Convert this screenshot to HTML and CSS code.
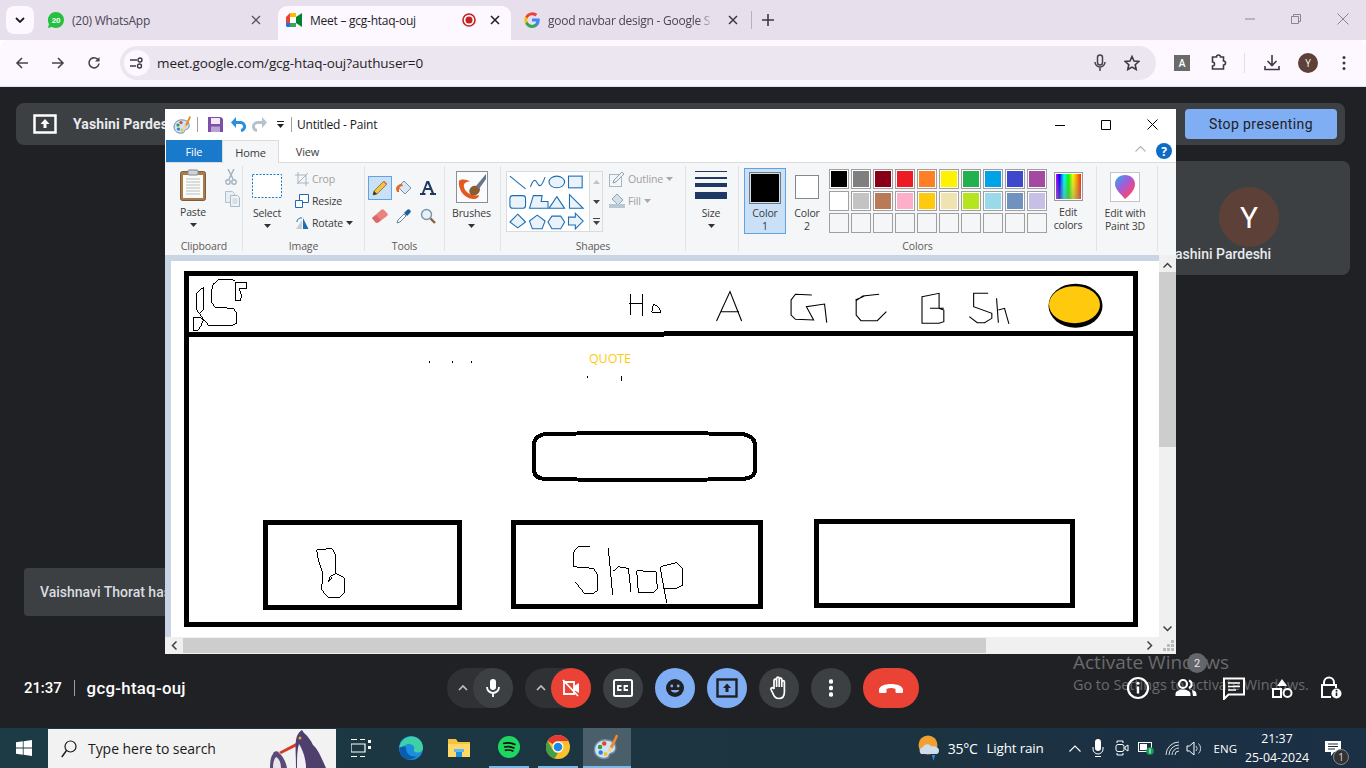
FILE: index.html
```html
<!DOCTYPE html>
<html lang="en">
<head>
<meta charset="utf-8">
<title>Meet</title>
<link rel="stylesheet" href="styles.css">
</head>
<body>
<svg class="defs" width="0" height="0">
  <symbol id="palette" viewBox="0 0 20 20">
    <path d="M1 12c0-5 5-8 9-7 4 0 7 3 6 7-1 3-3 2-4 3s0 3-3 3c-4 1-8-2-8-6z" fill="#cfe3f2" stroke="#6c8ba6"/>
    <circle cx="5" cy="10" r="1.6" fill="#2f9e44"/><circle cx="8" cy="7.5" r="1.6" fill="#e8412c"/><circle cx="5.5" cy="14" r="1.6" fill="#2f7fd6"/><circle cx="9" cy="15" r="1.4" fill="#f2c521"/>
    <path d="M16.500 1l1.500 1-4 9-2-1z" fill="#e98a2b"/><path d="M11.500 10l2 1-1 3-2-1z" fill="#f3d08a"/>
  </symbol>
  <symbol id="caret" viewBox="0 0 7 4"><path d="M0 0h7L3.500 4z" fill="#333"/></symbol>
</svg>

<div class="screen">
  <header class="tabstrip">
    <div class="tabmenu"><svg width="10" height="6" viewBox="0 0 10 6"><path d="M1 1l4 4 4-4" fill="none" stroke="#1f1f1f" stroke-width="1.800"/></svg></div>
    <div class="tab tab-wa">
      <svg class="favicon" width="16" height="16" viewBox="0 0 16 16"><path d="M8 0a8 8 0 0 1 0 16c-1.500 0-2.800-.4-4-1l-4 1 1-4A8 8 0 0 1 8 0z" fill="#25c03f"/><text x="8" y="11" class="wa-num">20</text></svg>
      <span class="tab-title">(20) WhatsApp</span>
      <svg class="x" width="10" height="10" viewBox="0 0 10 10"><path d="M1 1l8 8M9 1L1 9" stroke="#5c5866" stroke-width="1.400"/></svg>
    </div>
    <div class="tab tab-active">
      <svg class="favicon" width="16" height="14" viewBox="0 0 16 14"><path d="M0 4l4-4h6v4H4v6H0z" fill="#ea4335"/><path d="M0 10h4v4H1.500C.6 14 0 13.400 0 12.500z" fill="#1a73e8"/><path d="M4 10h6v4H4z" fill="#34a853"/><path d="M4 0h6v4H4z" fill="#fbbc04"/><path d="M10 4v6l6 4V0z" fill="#00832d"/><path d="M4 4h6v6H4z" fill="#fff"/></svg>
      <span class="tab-title tab-title-dark">Meet – gcg-htaq-ouj</span>
      <svg class="rec" width="14" height="14" viewBox="0 0 14 14"><circle cx="7" cy="7" r="6" fill="none" stroke="#c5221f" stroke-width="1.600"/><circle cx="7" cy="7" r="3.500" fill="#c5221f"/></svg>
      <svg class="x x-near" width="10" height="10" viewBox="0 0 10 10"><path d="M1 1l8 8M9 1L1 9" stroke="#1f1f1f" stroke-width="1.500"/></svg>
    </div>
    <div class="tab tab-g">
      <svg class="favicon" width="16" height="16" viewBox="0 0 16 16"><path d="M15.700 8.200c0-.6 0-1.100-.2-1.600H8v3h4.300c-.2 1-.8 1.900-1.600 2.400v2h2.600c1.500-1.400 2.400-3.400 2.400-5.800z" fill="#4285f4"/><path d="M8 16c2.200 0 4-.7 5.300-1.900l-2.600-2c-.7.500-1.600.8-2.700.8-2.100 0-3.900-1.400-4.500-3.300H1.300v2.100A8 8 0 0 0 8 16z" fill="#34a853"/><path d="M3.500 9.600a4.800 4.800 0 0 1 0-3.100V4.400H1.300a8 8 0 0 0 0 7.300z" fill="#fbbc05"/><path d="M8 3.200c1.200 0 2.300.4 3.100 1.200l2.300-2.300A8 8 0 0 0 1.300 4.400l2.200 2.100C4.100 4.600 5.900 3.200 8 3.200z" fill="#ea4335"/></svg>
      <span class="tab-title tab-fade">good navbar design - Google S</span>
      <svg class="x" width="10" height="10" viewBox="0 0 10 10"><path d="M1 1l8 8M9 1L1 9" stroke="#3c3846" stroke-width="1.500"/></svg>
    </div>
    <span class="tab-sep"></span>
    <svg class="newtab" width="12" height="12" viewBox="0 0 12 12"><path d="M6 0v12M0 6h12" stroke="#3c3846" stroke-width="1.600"/></svg>
    <div class="winctl">
      <svg width="10" height="10" viewBox="0 0 10 10"><path d="M0 5h10" stroke="#8a8594"/></svg>
      <svg width="10" height="10" viewBox="0 0 10 10"><path d="M.5 2.500h7v7h-7zM2.500 2.500v-2h7v7h-2" fill="none" stroke="#8a8594"/></svg>
      <svg width="12" height="12" viewBox="0 0 12 12"><path d="M.5.500l11 11M11.500.500l-11 11" stroke="#8a8594"/></svg>
    </div>
  </header>

  <nav class="toolbar">
    <svg class="nav-ico" width="14" height="14" viewBox="0 0 14 14"><path d="M13 7H2M7 2L2 7l5 5" fill="none" stroke="#47434f" stroke-width="1.600"/></svg>
    <svg class="nav-ico" width="14" height="14" viewBox="0 0 14 14"><path d="M1 7h11M7 2l5 5-5 5" fill="none" stroke="#47434f" stroke-width="1.600"/></svg>
    <svg class="nav-ico" width="14" height="14" viewBox="0 0 14 14"><path d="M12 7.500A5 5 0 1 1 10.500 3.200L12 4.500" fill="none" stroke="#47434f" stroke-width="1.600"/><path d="M12.500 1v4.500H8z" fill="#47434f"/></svg>
    <div class="omnibox">
      <span class="siteinfo"><svg width="14" height="12" viewBox="0 0 14 12"><path d="M0 3h7M0 9h6" stroke="#3c3846" stroke-width="1.400"/><circle cx="10" cy="3" r="2" fill="none" stroke="#3c3846" stroke-width="1.400"/><circle cx="9.500" cy="9" r="2" fill="none" stroke="#3c3846" stroke-width="1.400"/></svg></span>
      <span class="url">meet.google.com/gcg-htaq-ouj?authuser=0</span>
      <svg class="omni-mic" width="12" height="18" viewBox="0 0 12 18"><rect x="3.500" y="1" width="5" height="10" rx="2.500" fill="none" stroke="#47434f" stroke-width="1.500"/><path d="M1 8a5 5 0 0 0 10 0M6 13v4" fill="none" stroke="#47434f" stroke-width="1.500"/></svg>
      <svg class="omni-star" width="16" height="16" viewBox="0 0 16 16"><path d="M8 1.500l2 4.500 4.800.5-3.600 3.200 1 4.800L8 12.100l-4.200 2.400 1-4.800L1.200 6.500 6 6z" fill="none" stroke="#3c3846" stroke-width="1.600"/></svg>
    </div>
    <span class="ext-a">A</span>
    <svg class="ext-puzzle" width="18" height="18" viewBox="0 0 18 18"><path d="M3 4h4a2 2 0 0 1 4 0h3v4a2 2 0 0 1 0 4v4H3v-3a2 2 0 0 0 0-4z" fill="none" stroke="#3c3846" stroke-width="1.600" transform="translate(.5 -1)"/></svg>
    <span class="tool-sep"></span>
    <svg class="dl" width="16" height="16" viewBox="0 0 16 16"><path d="M8 0v10M3.500 6L8 10.500 12.500 6M1 11v3.500h14V11" fill="none" stroke="#3c3846" stroke-width="1.600"/></svg>
    <span class="avatar">Y</span>
    <svg class="dots" width="4" height="16" viewBox="0 0 4 16"><circle cx="2" cy="2.500" r="1.500" fill="#3c3846"/><circle cx="2" cy="8" r="1.500" fill="#3c3846"/><circle cx="2" cy="13.500" r="1.500" fill="#3c3846"/></svg>
  </nav>

  <main class="meet">
    <section class="present-bar">
      <svg class="present-ico" width="24" height="20" viewBox="0 0 24 20"><rect x="1.500" y="1.500" width="21" height="17" fill="none" stroke="#fff" stroke-width="2.500"/><path d="M12 5l-4.500 5H10.500v4h3v-4h3z" fill="#fff"/></svg>
      <span class="present-name">Yashini Pardeshi (Presentation)</span>
      <span class="stop-btn">Stop presenting</span>
    </section>
    <section class="tile-row">
      <div class="tile">
        <span class="tile-avatar">Y</span>
        <span class="tile-name">Yashini Pardeshi</span>
      </div>
    </section>
    <footer class="callbar">
      <div class="call-info"><span class="call-time">21:37</span><span class="call-sep"></span><span class="call-code">gcg-htaq-ouj</span></div>
      <div class="call-btns">
        <div class="pill">
          <svg class="pill-chev" width="10" height="6" viewBox="0 0 10 6"><path d="M1 5l4-4 4 4" fill="none" stroke="#bdc1c6" stroke-width="1.700"/></svg>
          <span class="cbtn"><svg width="14" height="20" viewBox="0 0 14 20"><rect x="4" y="1" width="6" height="11" rx="3" fill="#fff"/><path d="M1 9a6 6 0 0 0 12 0M7 15v4" fill="none" stroke="#fff" stroke-width="1.800"/></svg></span>
        </div>
        <div class="pill">
          <svg class="pill-chev" width="10" height="6" viewBox="0 0 10 6"><path d="M1 5l4-4 4 4" fill="none" stroke="#bdc1c6" stroke-width="1.700"/></svg>
          <span class="cbtn cbtn-red"><svg width="20" height="20" viewBox="0 0 20 20"><path d="M3 4h10v12H3z" fill="none" stroke="#fff" stroke-width="1.800"/><path d="M13 8l5-3v10l-5-3" fill="#fff"/><path d="M2 2l15 16" stroke="#fff" stroke-width="1.800"/></svg></span>
        </div>
        <span class="cbtn"><svg width="20" height="18" viewBox="0 0 20 18"><rect x="1" y="1" width="18" height="16" rx="1.500" fill="none" stroke="#fff" stroke-width="2"/><path d="M8.500 7H5v4h3.500M15 7h-3.500v4H15" fill="none" stroke="#fff" stroke-width="1.800"/></svg></span>
        <span class="cbtn cbtn-blue"><svg width="20" height="20" viewBox="0 0 20 20"><circle cx="10" cy="10" r="9" fill="#202124"/><circle cx="6.800" cy="8" r="1.400" fill="#7fadf6"/><circle cx="13.200" cy="8" r="1.400" fill="#7fadf6"/><path d="M5.500 12a5 5 0 0 0 9 0z" fill="#7fadf6"/></svg></span>
        <span class="cbtn cbtn-blue"><svg width="22" height="20" viewBox="0 0 22 20"><rect x="1.500" y="1.500" width="19" height="17" fill="none" stroke="#202124" stroke-width="2.400"/><path d="M11 5.500L7 10h2.500v4h3v-4H15z" fill="#202124"/></svg></span>
        <span class="cbtn"><svg width="20" height="24" viewBox="0 0 20 24"><path d="M5 13V4.500a1.300 1.300 0 0 1 2.600 0V11M7.600 11V2.500a1.300 1.300 0 0 1 2.600 0V11M10.200 11V3.500a1.300 1.300 0 0 1 2.600 0V11M12.800 11V6a1.300 1.300 0 0 1 2.600 0v10c0 4-2 6.500-5.500 6.500-3 0-4.500-1.500-5.500-4L2 13.500c-.6-1.500 1.500-2.500 2.500-1L5 13" fill="none" stroke="#fff" stroke-width="1.700"/></svg></span>
        <span class="cbtn"><svg width="4" height="18" viewBox="0 0 4 18"><circle cx="2" cy="2.500" r="2.200" fill="#fff"/><circle cx="2" cy="9" r="2.200" fill="#fff"/><circle cx="2" cy="15.500" r="2.200" fill="#fff"/></svg></span>
        <span class="endcall"><svg width="26" height="12" viewBox="0 0 26 12"><path d="M1 8c0-8 24-8 24 0v2c0 1-1 1-1.500 1H19c-1 0-1.500-.5-1.500-1.500V7c-3-1.300-6-1.300-9 0v2.500C8.500 10.500 8 11 7 11H2.500C2 11 1 11 1 10z" fill="#fff"/></svg></span>
      </div>
      <div class="call-right">
        <svg width="24" height="24" viewBox="0 0 24 24"><circle cx="12" cy="12" r="10" fill="none" stroke="#fff" stroke-width="2.200"/><path d="M12 10.500v7" stroke="#fff" stroke-width="2.400"/><circle cx="12" cy="7.300" r="1.500" fill="#fff"/></svg>
        <svg width="24" height="24" viewBox="0 0 24 24"><circle cx="9" cy="8" r="4" fill="none" stroke="#fff" stroke-width="2.200"/><path d="M15 4.500a4 4 0 0 1 0 7.500" fill="none" stroke="#fff" stroke-width="2"/><path d="M1.500 20v-2c0-3 4-4.500 7.500-4.500s7.500 1.500 7.500 4.500v2zM18 14c2.500.5 4.500 1.800 4.500 4v2H19" fill="#fff"/></svg>
        <svg width="24" height="24" viewBox="0 0 24 24"><path d="M2 2.500h20v16H6.500L2 23z" fill="none" stroke="#fff" stroke-width="2"/><path d="M6 7h12M6 10.500h12M6 14h8" stroke="#fff" stroke-width="1.600"/></svg>
        <svg width="24" height="24" viewBox="0 0 24 24"><path d="M12 3l5 7H7z" fill="#fff"/><rect x="3" y="13" width="8" height="8" fill="none" stroke="#fff" stroke-width="2"/><circle cx="17.500" cy="17" r="4" fill="none" stroke="#fff" stroke-width="2"/></svg>
        <svg width="24" height="24" viewBox="0 0 24 24"><path d="M6 9V6.500a5 5 0 0 1 10 0V9M13 21H4V9h14v3" fill="none" stroke="#fff" stroke-width="2"/><circle cx="18.500" cy="17.500" r="5" fill="#fff"/><path d="M18.500 16.500v3.500" stroke="#202124" stroke-width="1.600"/><circle cx="18.500" cy="14.800" r="1" fill="#202124"/></svg>
      </div>
    </footer>
    <div class="toast">Vaishnavi Thorat has joined</div>
    <div class="watermark"><span class="wm-1">Activate Windows</span><span class="wm-2">Go to Settings to activate Windows.</span></div>
    <span class="people-badge">2</span>
  </main>

  <footer class="taskbar">
    <svg class="win-logo" width="16" height="16" viewBox="0 0 16 16"><path d="M0 2.300l6.800-1v6.300H0zM7.600 1.200L16 0v7.600H7.600zM0 8.400h6.800v6.300l-6.800-1zM7.600 8.400H16V16l-8.400-1.200z" fill="#fff"/></svg>
    <div class="search">
      <svg width="16" height="18" viewBox="0 0 16 18"><circle cx="9.500" cy="6.500" r="5.500" fill="none" stroke="#1a1a1a" stroke-width="1.200"/><path d="M5.500 10.500L.8 17" stroke="#1a1a1a" stroke-width="1.400"/></svg>
      <span class="search-text">Type here to search</span>
      <svg class="penguins" width="62" height="40" viewBox="0 0 62 40"><path d="M4 40c0-7 1-12 3-14 0-3 5-4 6-1 4 3 7 9 8 15z" fill="#5a4a78"/><path d="M7 40c0-5 1-9 3-11 3 1 5 6 5 11z" fill="#e9e6ee"/><path d="M13 24L30 15l1 3-16 8z" fill="#d63b26"/><path d="M30 40c0-12-1-22 0-28 1-6 4-9 6-10l2 3c4 3 7 8 9 12 5 4 9 14 13 23z" fill="#4e3f6d"/><path d="M31 40c0-10 0-18 2-24 4 6 7 16 7 24z" fill="#f1eff4"/><circle cx="34" cy="10" r="1.500" fill="#e0a93c"/></svg>
    </div>
    <svg class="tb-task" width="20" height="18" viewBox="0 0 20 18"><path d="M0 .500h6M0 17.500h6M0 5h14v8H0zM9 .500h5M9 17.500h5" fill="none" stroke="#fff" stroke-width="1.200"/><path d="M17 1h3v3h-3zM17 7h3v3h-3zM17 13h3" fill="#fff"/></svg>
    <div class="tb-app tb-edge"><svg width="26" height="26" viewBox="0 0 26 26"><circle cx="13" cy="13" r="12" fill="#1b8ee0"/><path d="M1.500 12C2.500 4 11 0 17 2c5 2 8 6 8 11 0 3-3 5-6.500 4.500-3-.5-3-3-2-4.500-1-4-6-5-9-3-2 1.500-5 3-6.500 2z" fill="#3fd0a5"/><path d="M8 13c0 6 5 10 11 8-3 3-9 5-13 2-3-2-5-6-4.500-10C4 11 8 11 8 13z" fill="#0b5cad"/></svg></div>
    <div class="tb-app tb-files"><svg width="22" height="20" viewBox="0 0 22 20"><path d="M0 1h8l2 3h12v15H0z" fill="#f5c242"/><path d="M0 6h22v13H0z" fill="#ffd966"/><path d="M8 11h6v8H8z" fill="#1d8fe0"/><path d="M6 11h10v3H6z" fill="#5fb8f2"/></svg></div>
    <div class="tb-app tb-spot"><svg width="22" height="22" viewBox="0 0 22 22"><circle cx="11" cy="11" r="11" fill="#1ed760"/><path d="M5 7.500c4-1 9-.8 12.500 1.200M6 11c3.500-.8 7.500-.5 10.500 1.200M6.800 14.300c3-.6 6-.4 8.700 1" fill="none" stroke="#111" stroke-width="1.700"/></svg></div>
    <div class="tb-app tb-chrome"><svg width="24" height="24" viewBox="0 0 24 24"><circle cx="12" cy="12" r="12" fill="#fbc02d"/><path d="M12 0a12 12 0 0 1 10.400 6H12a6 6 0 0 0-5.200 3L1.600 6A12 12 0 0 1 12 0z" fill="#e53935"/><path d="M1.600 6l5.200 9a6 6 0 0 0 5.200 3l-3.500 5.600A12 12 0 0 1 1.600 6z" fill="#43a047"/><circle cx="12" cy="12" r="5.500" fill="#fff"/><circle cx="12" cy="12" r="4.300" fill="#1e88e5"/></svg></div>
    <div class="tb-app tb-paint"><svg width="28" height="28"><use href="#palette"/></svg></div>
    <div class="tray">
      <svg class="tray-weather" width="24" height="26" viewBox="0 0 24 26"><circle cx="10" cy="10" r="9.500" fill="#f0a030"/><path d="M3 19a4 4 0 0 1 2-7c1-3 7-4 8-.5 4-1 8 1 8 4s-2 3.500-3 3.500z" fill="#cfdcec"/><path d="M14 20h3l-1.500 6z" fill="#2d8fe8"/></svg>
      <span class="tray-temp">35°C</span><span class="tray-cond">Light rain</span>
      <svg class="tray-chev" width="12" height="7" viewBox="0 0 12 7"><path d="M.5 6.500L6 1l5.500 5.500" fill="none" stroke="#fff" stroke-width="1.100"/></svg>
      <svg class="tray-mic" width="12" height="18" viewBox="0 0 12 18"><rect x="3" y="0" width="6" height="12" rx="3" fill="#fff"/><path d="M1 8v2a5 5 0 0 0 10 0V8M3 17.500h6" fill="none" stroke="#fff"/></svg>
      <svg class="tray-cam" width="14" height="16" viewBox="0 0 14 16"><path d="M2 3V1h6v2M2 13v2h6v-2" fill="none" stroke="#fff"/><rect x="1" y="4.500" width="8" height="7" rx="2" fill="none" stroke="#fff"/><path d="M10 7l3-2v6l-3-2z" fill="none" stroke="#fff"/></svg>
      <svg class="tray-bat" width="16" height="14" viewBox="0 0 16 14"><rect x=".5" y="1.500" width="13" height="9" fill="none" stroke="#fff"/><rect x="2" y="3" width="7" height="6" fill="#fff"/><circle cx="12" cy="10" r="3.800" fill="#12a150"/><path d="M12 7.500v5" stroke="#fff"/></svg>
      <svg class="tray-wifi" width="15" height="15" viewBox="0 0 15 15"><path d="M1 14A13 13 0 0 1 14 1M4 14A10 10 0 0 1 14 4M7 14a7 7 0 0 1 7-7M10 14a4 4 0 0 1 4-4" fill="none" stroke="#d8dde0"/></svg>
      <svg class="tray-vol" width="16" height="15" viewBox="0 0 16 15"><path d="M1 5h2.500L8 1v13L3.500 10H1z" fill="none" stroke="#fff"/><path d="M10 5a3.500 3.500 0 0 1 0 5M12.500 2.500a7 7 0 0 1 0 10" fill="none" stroke="#c9d0d4"/></svg>
      <span class="tray-lang">ENG</span>
      <span class="tray-clock"><span>21:37</span><span>25-04-2024</span></span>
      <span class="notif"><svg width="16" height="15" viewBox="0 0 16 15"><path d="M0 0h16v11H9l-3 4v-4H0z" fill="#fff"/><path d="M3 3h10M3 5.500h10M3 8h7" stroke="#1c3040"/></svg><span class="notif-badge">1</span></span>
    </div>
  </footer>

  <div class="paint">
    <div class="p-title">
      <svg class="p-logo" width="20" height="20"><use href="#palette"/></svg>
      <span class="p-vsep"></span>
      <svg class="p-save" width="15" height="15" viewBox="0 0 15 15"><path d="M0 0h13l2 2v13H0z" fill="#7c4fa8"/><rect x="3" y="1" width="9" height="6" fill="#efeaf5"/><rect x="3" y="9.500" width="9" height="5.500" fill="#b9a2d2"/></svg>
      <svg class="p-undo" width="15" height="15" viewBox="0 0 15 15"><path d="M2 5.500h7a4 4 0 0 1 1 8" fill="none" stroke="#2a8fdc" stroke-width="3"/><path d="M0 5.500L5 0v11z" fill="#2a8fdc"/></svg>
      <svg class="p-redo" width="15" height="15" viewBox="0 0 15 15"><path d="M13 5.500H6a4 4 0 0 0-1 8" fill="none" stroke="#b6c3cf" stroke-width="3"/><path d="M15 5.500L10 0v11z" fill="#b6c3cf"/></svg>
      <svg class="p-qa" width="7" height="8" viewBox="0 0 7 8"><path d="M0 0h7v1H0zM0 3h7L3.500 7z" fill="#222"/></svg>
      <span class="p-vsep p-vsep2"></span>
      <span class="p-name">Untitled - Paint</span>
      <div class="p-win">
        <svg width="10" height="10" viewBox="0 0 10 10"><path d="M0 5.500h10" stroke="#000"/></svg>
        <svg width="10" height="10" viewBox="0 0 10 10"><path d="M.5.500h9v9h-9z" fill="none" stroke="#000"/></svg>
        <svg width="11" height="11" viewBox="0 0 11 11"><path d="M.5.500l10 10M10.500.500l-10 10" stroke="#000"/></svg>
      </div>
    </div>
    <div class="p-tabs">
      <span class="p-tab p-file">File</span>
      <span class="p-tab p-home">Home</span>
      <span class="p-tab">View</span>
      <svg class="p-collapse" width="11" height="6" viewBox="0 0 11 6"><path d="M.5 5.500l5-5 5 5" fill="none" stroke="#b5b5b5" stroke-width="1.200"/></svg>
      <span class="p-help">?</span>
    </div>
    <div class="ribbon">
      <section class="grp g-clip">
        <div class="grp-body">
          <div class="big paste">
            <svg width="26" height="32" viewBox="0 0 26 32"><rect x="0.500" y="2.500" width="25" height="29" rx="2" fill="#a87c4f" stroke="#7d5b39"/><rect x="3" y="6" width="20" height="23" fill="#fbfbf6"/><path d="M6 10h14M6 13h14M6 16h14M6 19h14M6 22h14M6 25h14" stroke="#b9bfc6"/><rect x="8" y="1" width="10" height="5" rx="1" fill="#cfd3d8" stroke="#7f8892"/></svg>
            <span class="big-label">Paste</span>
            <svg class="c" width="7" height="4"><use href="#caret"/></svg>
          </div>
          <div class="clip-side">
            <svg width="12" height="16" viewBox="0 0 12 16"><path d="M3 0l5 10M9 0L4 10" stroke="#a5b4c2" stroke-width="1.500"/><circle cx="3" cy="13" r="2.200" fill="none" stroke="#a5b4c2" stroke-width="1.400"/><circle cx="9" cy="13" r="2.200" fill="none" stroke="#a5b4c2" stroke-width="1.400"/></svg>
            <svg width="15" height="16" viewBox="0 0 15 16"><path d="M.5.500h7l2 2v9h-9z" fill="#e8eef4" stroke="#b3c2d0"/><path d="M5.500 4.500h7l2 2v9h-9z" fill="#eef3f7" stroke="#a9bacb"/><path d="M7.500 8h5M7.500 10h5M7.500 12h5" stroke="#c1ccd6"/></svg>
          </div>
        </div>
        <span class="grp-label">Clipboard</span>
      </section>
      <section class="grp g-image">
        <div class="grp-body">
          <div class="big select">
            <svg width="30" height="24" viewBox="0 0 30 24"><rect x=".5" y=".5" width="29" height="23" fill="#fff" stroke="#1e78c8" stroke-dasharray="2 1.500"/></svg>
            <span class="big-label">Select</span>
            <svg class="c" width="7" height="4"><use href="#caret"/></svg>
          </div>
          <div class="img-list">
            <div class="row dim"><svg width="14" height="14" viewBox="0 0 14 14"><path d="M3 0v11h11M0 3h11v11M13 1L2 12" fill="none" stroke="#a8b5c2"/></svg><span>Crop</span></div>
            <div class="row"><svg width="14" height="14" viewBox="0 0 14 14"><path d="M.5 6.500h7v7h-7zM4.500 6.500v-6h9v8h-6" fill="#fff" stroke="#1e6db3"/></svg><span>Resize</span></div>
            <div class="row"><svg width="14" height="14" viewBox="0 0 14 14"><path d="M1 13L7 4v9z" fill="#c9ced3"/><path d="M8 2l5.500 11H8z" fill="#1e6db3"/><path d="M2 6a4 4 0 0 1 5-4" fill="none" stroke="#1e6db3"/></svg><span>Rotate</span><svg class="c2" width="7" height="4"><use href="#caret"/></svg></div>
          </div>
        </div>
        <span class="grp-label">Image</span>
      </section>
      <section class="grp g-tools">
        <div class="grp-body tools-grid">
          <span class="tool on"><svg width="16" height="16" viewBox="0 0 16 16"><path d="M1 15l1-4L12 1l3 3L5 14z" fill="#f5c242" stroke="#7a6a3a" stroke-width=".8"/><path d="M1 15l1-4 3 3z" fill="#333"/><path d="M11 2l3 3 1-1-3-3z" fill="#e07a6c"/></svg></span>
          <span class="tool"><svg width="18" height="16" viewBox="0 0 18 16"><path d="M9 1l7 7-6 6-7-7z" fill="#dbe7f1" stroke="#6e93b4"/><path d="M1 9c0-3 3-5 6-5l1 2c-2 0-4 1-4 3v3H2z" fill="#e5672a"/></svg></span>
          <span class="tool"><svg width="16" height="14" viewBox="0 0 16 14"><path d="M6.500 0h2.500l5 12h2v2h-6v-2h1.500l-1-3H5l-1 3h1.500v2H0v-2h2zM5.800 7h3.800L7.700 2.500z" fill="#1f3864"/></svg></span>
          <span class="tool"><svg width="16" height="14" viewBox="0 0 16 14"><path d="M0 9l9-8c1-1 2-1 3 0l3 3c1 1 1 2 0 3l-8 6c-1 1-2 1-3 0z" fill="#e8837f"/><path d="M0 9l4-3 5 5-3 2.500c-1 .7-2 .5-3-.5z" fill="#d96a67"/></svg></span>
          <span class="tool"><svg width="16" height="16" viewBox="0 0 16 16"><path d="M1 15l1-3 6-6 2 2-6 6z" fill="#fff" stroke="#6b8aa7"/><path d="M8 5l3-3c1-1 2-1 3 0s1 2 0 3l-3 3z" fill="#1f5f9e"/></svg></span>
          <span class="tool"><svg width="16" height="16" viewBox="0 0 16 16"><circle cx="6.500" cy="6.500" r="5" fill="#e6f0f8" stroke="#7996b0" stroke-width="1.400"/><path d="M10.500 10.500L15 15" stroke="#8a6036" stroke-width="2.400"/></svg></span>
        </div>
        <span class="grp-label">Tools</span>
      </section>
      <section class="grp g-brush">
        <div class="grp-body">
          <div class="big brushes">
            <svg width="32" height="32" viewBox="0 0 32 32"><rect x=".5" y=".5" width="31" height="31" fill="#fafbfc" stroke="#8c8f92"/><path d="M3 10c-1 6 3 17 14 18 4 0 6-2 6-4-6 2-14-2-15-8-1-3 2-6 6-5-3-3-9-3-11-1z" fill="#e4571f"/><path d="M15 24c-3-3-2-7 2-9 3-1 6 1 7 3 0 4-4 8-9 6z" fill="#8a5c30"/><path d="M20 15L30 3v5l-7 10z" fill="#66768a"/></svg>
            <span class="big-label">Brushes</span>
            <svg class="c" width="7" height="4"><use href="#caret"/></svg>
          </div>
        </div>
        <span class="grp-label"></span>
      </section>
      <section class="grp g-shapes">
        <div class="grp-body shapes-body">
          <div class="gallery">
            <svg width="82" height="59" viewBox="0 0 84 58"><g fill="#eaf3fb" stroke="#1e6db3" stroke-width="1.100"><path d="M3 3l16 13" fill="none"/><path d="M24 14c3-8 5-8 7-4s4 5 8-6" fill="none"/><ellipse cx="51" cy="9" rx="8" ry="6"/><rect x="63" y="3" width="14" height="12"/><rect x="3" y="23" width="16" height="13" rx="3"/><path d="M24 36l4-13h9l-1 6h7v7z" transform="translate(-1 0)"/><path d="M51 24l8 12H43z"/><path d="M64 22l14 14H64z"/><path d="M11 44l8 8-8 6-8-6z" transform="translate(0 -2)"/><path d="M31 43l8 6-3 8H26l-3-8z"/><path d="M46 44h9l4 6-4 7h-9l-4-7z"/><path d="M64 46h7v-4l8 8-8 8v-4h-7z" transform="translate(-1 -1)"/></g></svg>
            <div class="gal-scroll">
              <span><svg width="7" height="4" viewBox="0 0 7 4"><path d="M0 4l3.500-4L7 4z" fill="#bdc4ca"/></svg></span>
              <span><svg width="7" height="4" viewBox="0 0 7 4"><path d="M0 0h7L3.500 4z" fill="#444"/></svg></span>
              <span><svg width="7" height="7" viewBox="0 0 7 7"><path d="M0 0h7v1H0zM0 3h7L3.500 7z" fill="#444"/></svg></span>
            </div>
          </div>
          <div class="shape-opts">
            <div class="row dim2"><svg width="16" height="16" viewBox="0 0 16 16"><rect x=".5" y="3.500" width="12" height="12" fill="none" stroke="#a8b5c2"/><path d="M4 12l1-3 8-8 2 2-8 8z" fill="#eef3f7" stroke="#93a5b5"/></svg><span>Outline</span><svg class="c2" width="7" height="4" viewBox="0 0 7 4"><path d="M0 0h7L3.500 4z" fill="#a9a9a9"/></svg></div>
            <div class="row dim2"><svg width="16" height="16" viewBox="0 0 16 16"><path d="M8 1l6 6-5 5-6-6z" fill="#d5dfe8" stroke="#8fa5b9"/><rect x="0" y="11" width="16" height="4" fill="#b9c7d3"/></svg><span>Fill</span><svg class="c2" width="7" height="4" viewBox="0 0 7 4"><path d="M0 0h7L3.500 4z" fill="#a9a9a9"/></svg></div>
          </div>
        </div>
        <span class="grp-label">Shapes</span>
      </section>
      <section class="grp g-size">
        <div class="grp-body">
          <div class="big size">
            <div class="lines"><i class="l1"></i><i class="l2"></i><i class="l3"></i><i class="l4"></i></div>
            <span class="big-label">Size</span>
            <svg class="c" width="7" height="4"><use href="#caret"/></svg>
          </div>
        </div>
        <span class="grp-label"></span>
      </section>
      <section class="grp g-colors">
        <div class="grp-body colors-body">
          <div class="col-btn col-on"><span class="col-sw1"></span><span class="col-lab">Color<br>1</span></div>
          <div class="col-btn"><span class="col-sw2"></span><span class="col-lab">Color<br>2</span></div>
          <div class="palette">
            <i class="s k01"></i><i class="s k02"></i><i class="s k03"></i><i class="s k04"></i><i class="s k05"></i><i class="s k06"></i><i class="s k07"></i><i class="s k08"></i><i class="s k09"></i><i class="s k10"></i>
            <i class="s k11"></i><i class="s k12"></i><i class="s k13"></i><i class="s k14"></i><i class="s k15"></i><i class="s k16"></i><i class="s k17"></i><i class="s k18"></i><i class="s k19"></i><i class="s k20"></i>
            <i class="s e"></i><i class="s e"></i><i class="s e"></i><i class="s e"></i><i class="s e"></i><i class="s e"></i><i class="s e"></i><i class="s e"></i><i class="s e"></i><i class="s e"></i>
          </div>
          <div class="edit-col"><span class="rainbow"></span><span class="col-lab">Edit<br>colors</span></div>
        </div>
        <span class="grp-label">Colors</span>
      </section>
      <section class="grp g-3d">
        <div class="grp-body">
          <div class="edit-3d">
            <span class="icon3d"><svg width="22" height="26" viewBox="0 0 22 26"><defs><linearGradient id="p3d" x1="0" y1="0" x2="1" y2="1"><stop offset="0" stop-color="#1fb7e8"/><stop offset=".4" stop-color="#9b5fe0"/><stop offset=".75" stop-color="#f2467d"/><stop offset="1" stop-color="#f7a13a"/></linearGradient></defs><path d="M11 1c6 0 10 4 10 9 0 6-5 11-10 15C8 21 1 16 1 10 1 5 5 1 11 1z" fill="url(#p3d)"/></svg></span>
            <span class="col-lab">Edit with<br>Paint 3D</span>
          </div>
        </div>
        <span class="grp-label"></span>
      </section>
    </div>
    <div class="p-mid">
      <div class="canvas-wrap">
        <svg class="drawing" width="988" height="376" viewBox="171 261 988 376">
          <g fill="none" stroke="#000" stroke-width="5" shape-rendering="crispEdges">
            <rect x="186.500" y="273.500" width="949" height="351"/>
            <path d="M187 334.500H664M664 333.500H1138"/>
            <rect x="265.500" y="522.500" width="194" height="85"/>
            <rect x="513.500" y="522.500" width="247" height="84"/>
            <rect x="816.500" y="521.500" width="256" height="84"/>
          </g>
          <path d="M545 434Q640 432 742 434Q755 436 755 445V470Q755 478 742 479Q640 481 545 479Q534 478 534 470V445Q534 436 545 434Z" fill="none" stroke="#000" stroke-width="4" shape-rendering="crispEdges"/>
          <g fill="none" stroke="#000" shape-rendering="crispEdges" transform="translate(170 260) scale(.33333)" stroke-width="3">
            <path d="M195 62L180 58H148L130 72L124 95V125L135 142L190 145L200 160V190L182 198H118L100 178L88 160"/>
            <path d="M100 82L80 100V150L88 160L100 150V82Z"/>
            <path d="M70 172H92L100 180L92 200L82 212H70Z"/>
            <path d="M197 67H230V86H207L214 105L212 122H197V67Z"/>
            <path d="M1381 102V165M1417 102V168M1378 130H1417"/>
            <path d="M1445 157L1450 132L1465 140L1473 157H1445Z"/>
            <path d="M778 304V308M847 302V309M904 303V309M1252 347V354M1354 348V362"/>
          </g>
          <g fill="none" stroke="#000" shape-rendering="crispEdges" transform="translate(610 260) scale(.36364 .33333)" stroke-width="3">
            <path d="M293 183L330 95L362 183M305 155H355"/>
            <path d="M555 105L510 103L498 120V165L510 178L560 180L540 140L590 132L596 188"/>
            <path d="M740 103L695 108L677 122V165L690 182H735L760 155M675 120L700 108"/>
            <path d="M858 110L905 100V145L918 150V185L905 190H858V110ZM880 145H918"/>
            <path d="M1040 100H1000V140L1050 160V175L1030 188H1010L988 170"/>
            <path d="M1063 115L1068 188M1068 150L1085 145L1090 165L1097 192"/>
          </g>
          <ellipse cx="1075.500" cy="305.700" rx="27" ry="22" fill="#000"/>
          <ellipse cx="1074.500" cy="304.700" rx="25.500" ry="18.500" fill="#ffc90e"/>
          <g fill="none" stroke="#000" shape-rendering="crispEdges" transform="translate(250 510) scale(.33333)" stroke-width="3">
            <path d="M200 120L245 115L255 130L258 190L285 205V245L270 262H235L215 240L218 190L205 150ZM258 190L240 200L235 215L248 200"/>
            <path d="M1020 110H985L972 125L970 170L1030 175L1043 195V240L1030 252H1005L975 215"/>
            <path d="M1075 115L1088 255M1088 185L1105 170L1135 175L1143 245"/>
            <path d="M1160 182L1218 185L1222 235L1210 248H1165ZM1230 170L1250 278M1232 170L1280 158L1298 175V225L1280 235H1240"/>
          </g>
        </svg>
        <span class="quote">QUOTE</span>
      </div>
      <div class="vscroll">
        <svg width="9" height="6" viewBox="0 0 9 6"><path d="M.5 5.500l4-4 4 4" fill="none" stroke="#404040" stroke-width="1.500"/></svg>
        <span class="vthumb"></span>
        <svg class="vdown" width="9" height="6" viewBox="0 0 9 6"><path d="M.5.500l4 4 4-4" fill="none" stroke="#404040" stroke-width="1.500"/></svg>
      </div>
    </div>
    <div class="hscroll">
      <svg width="6" height="9" viewBox="0 0 6 9"><path d="M5.500.500l-4 4 4 4" fill="none" stroke="#404040" stroke-width="1.500"/></svg>
      <span class="hthumb"></span>
      <svg class="hright" width="6" height="9" viewBox="0 0 6 9"><path d="M.5.500l4 4-4 4" fill="none" stroke="#404040" stroke-width="1.500"/></svg>
      <svg class="grip" width="11" height="11" viewBox="0 0 11 11"><path d="M8 0h3v3H8zM4 4h3v3H4zM8 4h3v3H8zM0 8h3v3H0zM4 8h3v3H4zM8 8h3v3H8z" fill="#bbb"/></svg>
    </div>
  </div>
</div>
</body>
</html>
```
FILE: styles.css
```css
* { box-sizing: border-box; }
html, body { margin: 0; padding: 0; }
body { width: 1366px; height: 768px; overflow: hidden; font-family: "Open Sans", "Noto Sans", sans-serif; }
.defs { position: absolute; }
.screen { position: relative; width: 1366px; height: 768px; display: flex; flex-direction: column; overflow: hidden; }
svg { display: block; flex: none; }

/* Chrome tabs */
.tabstrip { height: 40px; background: #e7dfec; display: flex; align-items: flex-end; flex: none; padding-left: 6px; }
.tabmenu { width: 28px; height: 28px; margin-bottom: 6px; border-radius: 8px; background: #fdf7ff; display: flex; align-items: center; justify-content: center; }
.tab { height: 34px; display: flex; align-items: center; font-size: 12px; color: #4a4655; letter-spacing: -.25px; }
.tab-wa { width: 244px; padding: 0 17px 6px 14px; }
.tab-active { width: 233px; background: #fdf7ff; border-radius: 9px 9px 0 0; padding: 0 11px 6px 8px; }
.tab-g { width: 240px; padding: 0 13px 6px 13px; }
.favicon { margin-right: 8px; }
.wa-num { font-family: "Liberation Sans", sans-serif; font-size: 8px; font-weight: 700; fill: #fff; text-anchor: middle; letter-spacing: -.3px; }
.tab-title { flex: 1; white-space: nowrap; overflow: hidden; }
.tab-title-dark { color: #1f1f1f; }
.tab-fade { color: #4a4655; mask-image: linear-gradient(90deg, #000 90%, transparent); }
.x-near { margin-left: 13px; }
.x { margin-left: 14px; }
.tab-sep { width: 1px; height: 18px; background: #b7b1bd; margin: 0 0 11px 0; }
.newtab { margin: 0 0 14px 10px; }
.winctl { margin-left: auto; display: flex; align-items: center; gap: 36px; padding: 0 17px 15px 0; }

/* Chrome toolbar */
.toolbar { height: 47px; background: #fdf7ff; display: flex; align-items: center; padding: 0 0 1px 15px; flex: none; border-bottom: 1px solid #e6e0ea; border-radius: 8px 8px 0 0; }
.nav-ico { margin-right: 22px; }
.omnibox { width: 1036px; height: 34px; margin-left: -3px; border-radius: 17px; background: #ece6f1; display: flex; align-items: center; padding-left: 4px; }
.siteinfo { width: 26px; height: 26px; border-radius: 50%; background: #fdf7ff; display: flex; align-items: center; justify-content: center; }
.url { margin-left: 7px; font-size: 13.500px; color: #1f1f1f; letter-spacing: -.1px; flex: 1; white-space: nowrap; }
.omni-mic { margin-right: 18px; }
.omni-star { margin-right: 16px; }
.ext-a { width: 16px; height: 16px; background: #6a6a6a; color: #fff; font-size: 10px; font-weight: 600; display: flex; align-items: center; justify-content: center; margin-left: 18px; }
.ext-puzzle { margin-left: 19px; }
.tool-sep { width: 1px; height: 20px; background: #e4daf3; margin: 0 19px 0 17px; }
.dl { margin-right: 18px; }
.avatar { width: 20px; height: 20px; border-radius: 50%; background: #5d4037; color: #fff; font-size: 10px; display: flex; align-items: center; justify-content: center; }
.dots { margin-left: 24px; }

/* Meet */
.meet { flex: 1; background: #202124; display: flex; flex-direction: column; position: relative; font-family: Roboto, "Noto Sans", sans-serif; color: #fff; }
.present-bar { height: 42px; margin: 16px 21px 0 16px; background: #3c4043; border-radius: 8px; display: flex; align-items: center; padding: 0 8px 0 17px; flex: none; }
.present-ico { margin-right: 16px; }
.present-name { font-size: 14px; font-weight: 700; color: #e8eaed; letter-spacing: .1px; }
.stop-btn { margin-left: auto; width: 152px; height: 30px; border-radius: 4px; background: #80aef5; color: #202124; font-size: 14px; font-weight: 400; letter-spacing: .4px; display: flex; align-items: center; justify-content: center; }
.tile-row { display: flex; justify-content: flex-end; margin-top: 16px; padding-right: 16px; flex: none; }
.tile { width: 202px; height: 114px; background: #3c4043; border-radius: 8px; display: flex; flex-direction: column; align-items: flex-start; padding: 26px 0 0 19px; }
.tile-avatar { width: 60px; height: 60px; border-radius: 50%; background: #5d4037; color: #fff; font-size: 30px; display: flex; align-items: center; justify-content: center; margin-left: 52px; }
.tile-name { font-size: 14px; line-height: 14px; font-weight: 500; color: #e8eaed; white-space: nowrap; }
.callbar { margin-top: auto; height: 80px; padding: 0 24px; display: flex; align-items: center; flex: none; }
.call-info { width: 423px; display: flex; align-items: center; font-size: 15px; font-weight: 500; flex: none; }
.call-sep { width: 1px; height: 16px; background: #9aa0a6; margin: 0 12px; }
.call-time { letter-spacing: -.1px; }
.call-code { font-size: 16.800px; letter-spacing: .3px; }
.call-btns { display: flex; align-items: center; gap: 12px; }
.pill { width: 66px; height: 40px; border-radius: 20px; background: #303134; display: flex; align-items: center; padding-left: 11px; }
.pill-chev { margin-right: 5px; }
.pill .cbtn { margin-left: auto; }
.cbtn { width: 40px; height: 40px; border-radius: 50%; background: #3c4043; display: flex; align-items: center; justify-content: center; flex: none; }
.cbtn-red { background: #ea4335; }
.cbtn-blue { background: #80aef5; }
.endcall { width: 56px; height: 40px; border-radius: 20px; background: #ea4335; display: flex; align-items: center; justify-content: center; }
.call-right { margin-left: auto; display: flex; gap: 24px; align-items: center; }
.toast { position: absolute; left: 24px; top: 481px; width: 240px; height: 48px; background: #3c4043; border-radius: 4px; display: flex; align-items: center; padding-left: 16px; font-size: 14px; font-weight: 500; color: #dadce0; white-space: nowrap; }
.watermark { position: absolute; left: 1073px; top: 563px; display: flex; flex-direction: column; color: rgba(255,255,255,.34); font-family: "Open Sans", sans-serif; pointer-events: none; white-space: nowrap; }
.wm-1 { font-size: 19px; line-height: 24px; }
.wm-2 { font-size: 14.400px; line-height: 22px; }
.people-badge { position: absolute; left: 1187px; top: 566px; width: 20px; height: 20px; border-radius: 50%; background: #63666b; color: #e8eaed; font-size: 11px; display: flex; align-items: center; justify-content: center; }

/* Taskbar */
.taskbar { height: 40px; flex: none; display: flex; align-items: center; background: linear-gradient(90deg, #1c3b44, #1c3440 55%, #1b2f45); color: #fff; font-family: "Open Sans", sans-serif; position: relative; padding-left: 16px; }
.search { width: 288px; height: 39px; margin: 1px 0 0 16px; background: #f2f2f2; display: flex; align-items: center; padding-left: 13px; overflow: hidden; position: relative; align-self: flex-end; }
.search-text { margin-left: 11px; font-size: 14px; color: #1a1a1a; white-space: nowrap; letter-spacing: -.05px; }
.penguins { position: absolute; right: 8px; bottom: 0; }
.tb-task { margin-left: 15px; }
.tb-app { display: flex; align-items: center; justify-content: center; height: 40px; position: relative; flex: none; }
.tb-edge { width: 40px; margin-left: 20px; }
.tb-files { width: 40px; margin-left: 8px; }
.tb-spot { width: 40px; margin-left: 10px; border-bottom: 2px solid #76b9ed; }
.tb-chrome { width: 40px; margin-left: 9px; border-bottom: 2px solid #76b9ed; }
.tb-paint { width: 48px; margin-left: 5px; background: #4b5f6a; border-bottom: 2px solid #76b9ed; }
.tray { margin-left: auto; display: flex; align-items: center; font-size: 13px; height: 40px; }
.tray-temp { margin-left: 6px; font-size: 14px; letter-spacing: -.3px; }
.tray-cond { margin-left: 9px; font-size: 13.500px; letter-spacing: -.2px; }
.tray-chev { margin-left: 25px; }
.tray-mic { margin-left: 11px; }
.tray-cam { margin-left: 11px; }
.tray-bat { margin-left: 9px; }
.tray-wifi { margin-left: 11px; }
.tray-vol { margin-left: 6px; }
.tray-lang { margin-left: 12px; font-size: 11.500px; }
.tray-clock { width: 80px; display: flex; flex-direction: column; align-items: center; font-size: 12.300px; line-height: 19px; margin-left: 0; }
.notif { position: relative; margin: 0 25px 0 8px; display: block; }
.notif-badge { position: absolute; left: 8px; top: 8px; width: 16px; height: 16px; border-radius: 50%; background: #333; border: 1px solid #888; font-size: 10px; display: flex; align-items: center; justify-content: center; color: #ddd; }

/* Paint window: a window lying over the meeting */
.paint { position: absolute; left: 165px; top: 109px; width: 1011px; height: 545px; background: #fff; display: flex; flex-direction: column; font-family: "Open Sans", "Noto Sans", sans-serif; font-size: 10.500px; color: #3b3b3b; letter-spacing: -.15px; }
.p-title { height: 31px; display: flex; align-items: center; padding-left: 8px; flex: none; }
.p-logo { margin-right: 4px; }
.p-vsep { width: 1px; height: 15px; background: #a0a0a0; }
.p-save { margin-left: 10px; }
.p-undo { margin-left: 8px; }
.p-redo { margin-left: 6px; }
.p-qa { margin-left: 10px; }
.p-vsep2 { margin-left: 7px; }
.p-name { margin-left: 5px; font-size: 12px; color: #1a1a1a; letter-spacing: -.2px; }
.p-win { margin-left: auto; display: flex; align-items: center; gap: 36px; padding-right: 18px; }
.p-tabs { height: 23px; display: flex; align-items: stretch; flex: none; padding-left: 1px; border-bottom: 1px solid #dadbdc; position: relative; }
.p-tab { width: 57px; display: flex; align-items: center; justify-content: center; font-size: 11px; color: #3b3b3b; }
.p-file { width: 56px; background: #1979ca; color: #fff; }
.p-home { background: #f5f6f7; border: 1px solid #dadbdc; border-bottom: 0; height: 23px; }
.p-collapse { margin: 6px 0 0 auto; align-self: flex-start; }
.p-help { width: 16px; height: 16px; margin: 3px 4px 0 10px; border-radius: 50%; background: #0e6cc4; color: #fff; font-size: 12px; font-weight: 700; display: flex; align-items: center; justify-content: center; align-self: flex-start; }

.ribbon { height: 92px; background: #f5f6f7; display: flex; flex: none; padding-left: 1px; }
.grp { display: flex; flex-direction: column; border-right: 1px solid #e2e3e4; height: 85px; margin-top: 3px; flex: none; }
.grp-body { flex: 1; display: flex; min-height: 0; }
.grp-label { height: 10px; line-height: 10px; text-align: center; font-size: 10.500px; color: #5b5b5b; flex: none; }
.g-clip { width: 77px; }
.g-image { width: 122px; }
.g-tools { width: 80px; }
.g-brush { width: 56px; }
.g-shapes { width: 185px; }
.g-size { width: 53px; }
.g-colors { width: 358px; }
.g-3d { width: 61px; }
.big { display: flex; flex-direction: column; align-items: center; }
.big-label { height: 14px; line-height: 14px; }
.big .c { margin-top: 4px; }
.paste { width: 42px; margin-left: 6px; padding-top: 3px; }
.paste .big-label { margin-top: 4px; }
.clip-side { display: flex; flex-direction: column; gap: 6px; padding: 3px 0 0 11px; }
.select { width: 46px; padding-top: 8px; margin-left: 1px; }
.select .big-label { margin-top: 8px; }
.img-list { display: flex; flex-direction: column; gap: 6px; padding-top: 5px; margin-left: 5px; }
.row { display: flex; align-items: center; height: 16px; gap: 3px; white-space: nowrap; }
.c2 { margin-left: 0; }
.dim { color: #a0a0a0; }
.dim2 { color: #a0a0a0; }
.tools-grid { display: grid; grid-template-columns: repeat(3, 24px); grid-template-rows: 24px 24px; gap: 4px 0; padding: 10px 0 0 3px; align-content: start; }
.tool { display: flex; align-items: center; justify-content: center; }
.tool.on { background: #c9e0f7; border: 1px solid #62a2e4; }
.brushes { width: 53px; padding-top: 5px; }
.brushes .big-label { margin-top: 3px; }
.shapes-body { padding: 5px 0 0 5px; }
.gallery { width: 97px; height: 61px; background: #fff; border: 1px solid #dadbdc; display: flex; align-self: flex-start; }
.gal-scroll { width: 13px; border-left: 1px solid #dadbdc; display: flex; flex-direction: column; background: #f5f6f7; }
.gal-scroll span { flex: 1; display: flex; align-items: center; justify-content: center; }
.shape-opts { display: flex; flex-direction: column; gap: 6px; margin: 0 0 0 6px; }
.size { width: 50px; padding-top: 5px; }
.lines { width: 32px; height: 28px; display: flex; flex-direction: column; justify-content: space-between; }
.lines i { display: block; background: #1f3864; }
.l1 { height: 1px; } .l2 { height: 2px; } .l3 { height: 4px; } .l4 { height: 7px; }
.size .big-label { margin-top: 7px; }
.colors-body { padding: 2px 0 0 5px; }
.col-btn { width: 42px; height: 66px; display: flex; flex-direction: column; align-items: center; border: 1px solid transparent; flex: none; }
.col-on { background: #c9e0f7; border-color: #62a2e4; }
.col-lab { text-align: center; line-height: 13px; display: block; }
.col-sw1 { width: 32px; height: 32px; background: #000; border: 1px solid #777; box-shadow: inset 0 0 0 1px #c9e0f7; margin: 3px 0 3px; flex: none; }
.col-sw2 { width: 24px; height: 24px; background: #fff; border: 1px solid #888; margin: 6px 0 8px; flex: none; }
.palette { display: grid; grid-template-columns: repeat(10, 20px); grid-template-rows: repeat(3, 20px); gap: 2px; margin: 1px 0 0 1px; align-self: flex-start; }
.s { display: block; border: 1px solid #a0a0a0; box-shadow: inset 0 0 0 1px #fff; }
.s.e { background: transparent; box-shadow: none; }
.k01 { background: #000; } .k02 { background: #7f7f7f; } .k03 { background: #880015; } .k04 { background: #ed1c24; } .k05 { background: #ff7f27; }
.k06 { background: #fff200; } .k07 { background: #22b14c; } .k08 { background: #00a2e8; } .k09 { background: #3f48cc; } .k10 { background: #a349a4; }
.k11 { background: #fff; } .k12 { background: #c3c3c3; } .k13 { background: #b97a57; } .k14 { background: #ffaec9; } .k15 { background: #ffc90e; }
.k16 { background: #efe4b0; } .k17 { background: #b5e61d; } .k18 { background: #99d9ea; } .k19 { background: #7092be; } .k20 { background: #c8bfe7; }
.edit-col { width: 40px; margin-left: 1px; display: flex; flex-direction: column; align-items: center; }
.rainbow { width: 29px; height: 29px; border: 1px solid #999; margin: 4px 0 5px; box-shadow: inset 0 0 0 1px #fff; background: linear-gradient(#0000, #8888), linear-gradient(90deg, #f0f, #00f, #0ff, #0f0, #ff0, #f80, #f00); flex: none; }
.edit-3d { width: 56px; display: flex; flex-direction: column; align-items: center; padding-top: 6px; }
.icon3d { width: 30px; height: 30px; background: #fff; border: 1px solid #c5c5c5; display: flex; align-items: center; justify-content: center; margin-bottom: 5px; flex: none; }

/* Canvas */
.p-mid { flex: 1; display: flex; min-height: 0; }
.canvas-wrap { flex: 1; background: #c9d4e5; padding: 6px 0 0 6px; position: relative; overflow: hidden; }
.drawing { background: #fff; }
.quote { position: absolute; left: 424px; top: 95px; color: #ffc90e; font-size: 12.500px; font-family: "Open Sans", sans-serif; letter-spacing: -.1px; }
.vscroll { width: 17px; background: #f0f0f0; display: flex; flex-direction: column; align-items: center; padding-top: 7px; }
.vthumb { width: 17px; height: 175px; background: #cdcdcd; margin-top: 4px; }
.vdown { margin-top: auto; margin-bottom: 5px; }
.hscroll { height: 17px; background: #f0f0f0; display: flex; align-items: center; padding-left: 6px; flex: none; position: relative; }
.hthumb { width: 803px; height: 15px; background: #cdcdcd; margin-left: 6px; }
.hright { margin-left: 161px; }
.grip { margin-left: auto; margin-right: 2px; }
```
